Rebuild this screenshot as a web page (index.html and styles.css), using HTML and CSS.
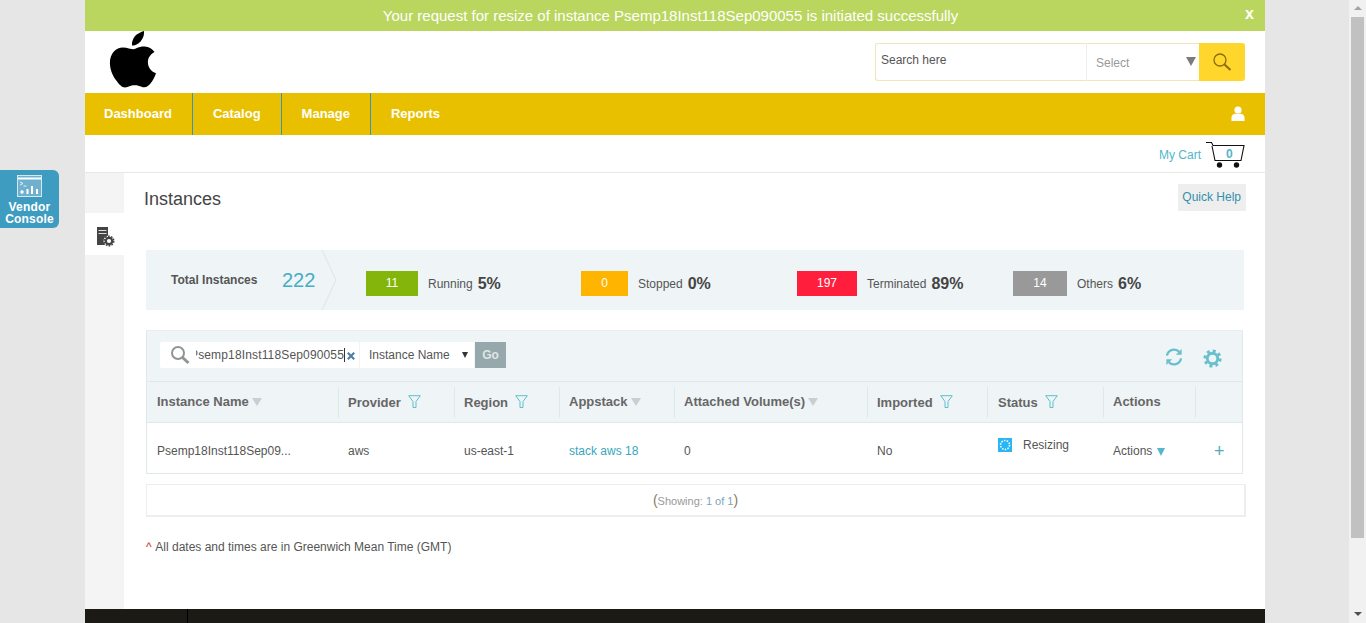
FILE: index.html
```html
<!DOCTYPE html>
<html lang="en">
<head>
    <meta charset="UTF-8">
    <title>Instances</title>
    <link rel="stylesheet" href="styles.css">
</head>
<body>
    <a class="vendor-tab">
        <svg width="26" height="23" viewBox="0 0 26 23" fill="none" stroke="#fff">
            <rect x="0.5" y="0.5" width="24" height="21" fill="#6fb0cf" stroke="#d5e8f2"/>
            <path d="M1 3.5h23" stroke="#fff" stroke-width="2"/>
            <path d="M3 7l3 1.5-3 1.5M6.5 11h3" stroke="#fff" stroke-width="0.8"/>
            <circle cx="5" cy="17" r="1.7" fill="#fff" stroke="none"/>
            <path d="M10.5 19v-5M15 19v-8M20 19v-5" stroke="#fff" stroke-width="2"/>
        </svg>
        <span>Vendor<br>Console</span>
    </a>

    <div class="viewport">
        <div class="app">
            <div class="notice">
                <span>Your request for resize of instance Psemp18Inst118Sep090055 is initiated successfully</span>
                <b class="notice-close">x</b>
            </div>

            <header class="header">
                <svg class="logo" width="48" height="58" viewBox="0 1 48 58">
                    <path fill="#000" d="M35 1c.4 4-1.100 7.600-3.300 10.300-2.300 2.800-5.500 4.500-8.700 4.200-.5-3.700 1.200-7.400 3.300-9.800C28.600 3.900 32 1.800 35 1z"/>
                    <path fill="#000" d="M24.500 19.300c2.200 0 5.200-2.700 10-2.700 3.200 0 7.900 1.200 11 5.300-5.600 3.200-6.600 7.400-6.600 10.300 0 5.600 3.700 9.400 8.100 11.100-1 3.200-2.500 6.100-4.400 8.700-2.300 3.100-4.500 5.300-7.400 5.300-3.200 0-4.700-2-9.600-2-4.600 0-6.300 2.100-9.500 2.100-3.200 0-5.800-2.800-8.200-6.200C4.300 47.400.900 39.900.900 33c0-9.700 6.300-15.500 13-15.500 4.500 0 7.900 1.800 10.600 1.800z"/>
                </svg>
                <form class="site-search">
                    <span class="site-search-text">Search here</span>
                    <span class="site-search-select">Select<i class="caret-grey"></i></span>
                    <span class="site-search-btn">
                        <svg width="20" height="20" viewBox="0 0 20 20" fill="none" stroke="#8a6d0b">
                            <circle cx="8" cy="8" r="6" stroke-width="1.300"/>
                            <path d="M12.500 12.500l6 5.500" stroke-width="2"/>
                        </svg>
                    </span>
                </form>
            </header>

            <nav class="nav">
                <a class="nav-item nav-first">Dashboard</a>
                <a class="nav-item">Catalog</a>
                <a class="nav-item">Manage</a>
                <a class="nav-item nav-last">Reports</a>
                <svg class="nav-user" width="14" height="15" viewBox="0 0 14 15" fill="#fff">
                    <circle cx="7" cy="4" r="3.600"/>
                    <path d="M0.500 15v-3.500c0-2.500 2-3.800 4-3.800h5c2 0 4 1.300 4 3.800V15z"/>
                </svg>
            </nav>

            <div class="cart-bar">
                <a class="cart-link">My Cart</a>
                <span class="cart">
                    <svg width="40" height="27" viewBox="0 0 40 27" fill="none" stroke="#111">
                        <path d="M1 .5h5.500l1.500 3h31l-3 15H10L7 4" stroke-width="1.100"/>
                        <circle cx="14.500" cy="23" r="2.700" fill="#111" stroke="none"/>
                        <circle cx="31.500" cy="23" r="2.700" fill="#111" stroke="none"/>
                    </svg>
                    <b class="cart-count">0</b>
                </span>
            </div>

            <div class="body-row">
                <aside class="rail">
                    <div class="rail-tab">
                        <svg width="18" height="20" viewBox="0 0 18 20">
                            <path fill="#444" d="M0 0h11v18H0z"/>
                            <path stroke="#ddd" stroke-width="1" d="M1.500 3.500h8M1.500 6.500h8"/>
                            <circle cx="12" cy="14" r="5.500" fill="#fff"/>
                            <circle cx="12" cy="14" r="3.200" fill="none" stroke="#444" stroke-width="2.200"/>
                            <circle cx="12" cy="14" r="4.800" fill="none" stroke="#444" stroke-width="1.400" stroke-dasharray="1.800 1.200"/>
                        </svg>
                    </div>
                </aside>

                <main class="main">
                    <div class="title-row">
                        <h1>Instances</h1>
                        <a class="quick-help">Quick Help</a>
                    </div>

                    <section class="summary">
                        <div class="summary-total">
                            <span class="summary-label">Total Instances</span>
                            <span class="summary-num">222</span>
                            <svg class="summary-chevron" width="16" height="60" viewBox="0 0 16 60" fill="none">
                                <path d="M1 0l14 30L1 60" stroke="#dde3e6"/>
                            </svg>
                        </div>
                        <div class="stat stat-running"><span class="stat-box">11</span><span class="stat-name">Running</span><b>5%</b></div>
                        <div class="stat stat-stopped"><span class="stat-box">0</span><span class="stat-name">Stopped</span><b>0%</b></div>
                        <div class="stat stat-terminated"><span class="stat-box">197</span><span class="stat-name">Terminated</span><b>89%</b></div>
                        <div class="stat stat-others"><span class="stat-box">14</span><span class="stat-name">Others</span><b>6%</b></div>
                    </section>

                    <section class="grid-wrap">
                        <div class="toolbar">
                            <div class="filter-input">
                                <svg width="20" height="20" viewBox="0 0 20 20" fill="none" stroke="#8f9597">
                                    <circle cx="8" cy="8" r="6" stroke-width="2"/>
                                    <path d="M12.500 12.500l6 5.500" stroke-width="3"/>
                                </svg>
                                <span class="filter-value"><span>Psemp18Inst118Sep090055</span></span>
                                <svg class="filter-clear" width="8" height="8" viewBox="0 0 8 8" stroke="#4e7ea6" stroke-width="2.200">
                                    <path d="M.8.800l6.400 6.400M7.200.800L.8 7.200"/>
                                </svg>
                            </div>
                            <div class="filter-select">Instance Name<i class="caret-dark"></i></div>
                            <span class="go-btn">Go</span>
                            <div class="tool-icons">
                                <svg class="icon-refresh" width="18" height="18" viewBox="0 0 20 20" fill="none" stroke="#68c0cd" stroke-width="2.600">
                                    <path d="M2.200 8.500A8 8 0 0 1 16 4.500"/>
                                    <path d="M17.800 11.500A8 8 0 0 1 4 15.500"/>
                                    <path fill="#68c0cd" stroke="none" d="M18.500 1v6.500H12zM1.500 19v-6.500H8z"/>
                                </svg>
                                <svg width="19" height="19" viewBox="0 0 20 20" fill="none" stroke="#68c0cd">
                                    <circle cx="10" cy="10" r="5.500" stroke-width="3"/>
                                    <circle cx="10" cy="10" r="8" stroke-width="3.200" stroke-dasharray="3.100 3.180"/>
                                </svg>
                            </div>
                        </div>

                        <div class="grid-row grid-head">
                            <div class="cell c-name">Instance Name<i class="sort"></i></div>
                            <div class="cell c-provider has-filter">Provider<svg class="funnel" width="13" height="14" viewBox="0 0 13 14"><path d="M.7.700h11.600L8 6.500V12.500H5V6.500z"/></svg></div>
                            <div class="cell c-region has-filter">Region<svg class="funnel" width="13" height="14" viewBox="0 0 13 14"><path d="M.7.700h11.600L8 6.500V12.500H5V6.500z"/></svg></div>
                            <div class="cell c-appstack">Appstack<i class="sort"></i></div>
                            <div class="cell c-volumes">Attached Volume(s)<i class="sort"></i></div>
                            <div class="cell c-imported has-filter">Imported<svg class="funnel" width="13" height="14" viewBox="0 0 13 14"><path d="M.7.700h11.600L8 6.500V12.500H5V6.500z"/></svg></div>
                            <div class="cell c-status has-filter">Status<svg class="funnel" width="13" height="14" viewBox="0 0 13 14"><path d="M.7.700h11.600L8 6.500V12.500H5V6.500z"/></svg></div>
                            <div class="cell c-actions">Actions</div>
                            <div class="cell c-more"></div>
                        </div>

                        <div class="grid-row grid-data">
                            <div class="cell c-name">Psemp18Inst118Sep09...</div>
                            <div class="cell c-provider">aws</div>
                            <div class="cell c-region">us-east-1</div>
                            <div class="cell c-appstack"><a>stack aws 18</a></div>
                            <div class="cell c-volumes">0</div>
                            <div class="cell c-imported">No</div>
                            <div class="cell c-status status-cell">
                                <span class="status-icon">
                                    <svg width="14" height="14" viewBox="0 0 14 14" fill="none">
                                        <circle cx="7" cy="7" r="4.500" stroke="#fff" stroke-width="1.500" stroke-dasharray="1.500 1.300"/>
                                    </svg>
                                </span>
                                <span>Resizing</span>
                            </div>
                            <div class="cell c-actions">Actions<i class="caret-teal"></i></div>
                            <div class="cell c-more"><span class="plus">+</span></div>
                        </div>
                    </section>

                    <div class="pager">(<span class="pager-text">Showing: <em>1 of 1</em></span>)</div>

                    <p class="gmt-note"><span class="gmt-mark">^</span> All dates and times are in Greenwich Mean Time (GMT)</p>
                </main>
            </div>

            <footer class="footer"><span class="footer-line"></span></footer>
        </div>
    </div>

    <div class="scrollbar">
        <i class="scroll-up"></i>
        <div class="scroll-track"><div class="scroll-thumb"></div></div>
        <i class="scroll-down"></i>
    </div>
</body>
</html>
```

FILE: styles.css
```css
html, body {
    height: 100%;
}

body {
    margin: 0;
    display: flex;
    overflow: hidden;
    background-color: #e6e6e6;
    font-family: "Liberation Sans", Arial, sans-serif;
    font-size: 12px;
    color: #555;
}

a {
    color: inherit;
    text-decoration: none;
}

i {
    display: inline-block;
}

.viewport {
    flex: 1;
    padding-left: 85px;
}

.app {
    width: 1180px;
    height: 623px;
    display: flex;
    flex-direction: column;
    background-color: #fff;
}

/* vendor console tab */
.vendor-tab {
    position: absolute;
    left: 0;
    top: 170px;
    width: 59px;
    height: 58px;
    box-sizing: border-box;
    padding-top: 5px;
    background-color: #3f9cc1;
    border-radius: 0 6px 6px 0;
    color: #fff;
    font-size: 12px;
    letter-spacing: 0.2px;
    font-weight: bold;
    line-height: 12px;
    text-align: center;
}

.vendor-tab svg {
    display: block;
    margin: 0 auto 3px;
}

/* notice */
.notice {
    position: relative;
    height: 31px;
    box-sizing: border-box;
    padding-right: 9px;
    background-color: #bad65f;
    color: #fff;
    font-size: 15px;
    line-height: 31px;
    text-align: center;
}

.notice-close {
    position: absolute;
    right: 11px;
    top: -2px;
    font-size: 16px;
}

/* header */
.header {
    height: 62px;
    display: flex;
    justify-content: space-between;
    padding: 0 20px 0 24px;
}

.logo {
    display: block;
}

.site-search {
    display: flex;
    width: 370px;
    height: 38px;
    margin: 12px 0 0;
}

.site-search-text {
    width: 212px;
    box-sizing: border-box;
    border: 1px solid #efe7b5;
    border-right: 1px solid #eee;
    border-radius: 3px 0 0 3px;
    color: #555;
    line-height: 33px;
    padding-left: 5px;
}

.site-search-select {
    position: relative;
    width: 112px;
    border-top: 1px solid #efe7b5;
    border-bottom: 1px solid #efe7b5;
    color: #999;
    line-height: 38px;
    padding-left: 9px;
    box-sizing: border-box;
}

.caret-grey {
    position: absolute;
    right: 3px;
    top: 13px;
    border-left: 5px solid transparent;
    border-right: 5px solid transparent;
    border-top: 9px solid #7c7c7c;
}

.site-search-btn {
    width: 46px;
    display: flex;
    align-items: center;
    justify-content: center;
    background-color: #ffd62b;
    border-radius: 0 3px 3px 0;
}

/* nav */
.nav {
    height: 42px;
    display: flex;
    align-items: stretch;
    background-color: #e9c000;
    color: #fff;
    font-size: 13px;
    font-weight: bold;
    line-height: 41px;
}

.nav-item {
    padding: 0 20px;
    border-right: 1px solid #3b93b5;
}

.nav-first {
    padding-left: 19px;
}

.nav-last {
    border-right: none;
}

.nav-user {
    margin: 13px 20px 0 auto;
}

/* cart */
.cart-bar {
    height: 37px;
    display: flex;
    justify-content: flex-end;
    padding-right: 20px;
    border-bottom: 1px solid #e8e8e8;
}

.cart-link {
    color: #53b6cb;
    line-height: 40px;
    margin-right: 4px;
}

.cart {
    position: relative;
    width: 40px;
    padding-top: 7px;
}

.cart svg {
    display: block;
}

.cart-count {
    position: absolute;
    left: 21px;
    top: 12px;
    color: #53b6cb;
}

/* body */
.body-row {
    flex: 1;
    display: flex;
}

.rail {
    flex: none;
    width: 39px;
    padding-top: 40px;
    background-color: #f4f4f4;
}

.rail-tab {
    height: 42px;
    box-sizing: border-box;
    padding: 14px 0 0 12px;
    background-color: #fff;
}

.rail-tab svg {
    display: block;
}

.main {
    flex: 1;
    min-width: 0;
    padding: 0 20px 0 22px;
}

.title-row {
    display: flex;
    justify-content: space-between;
    height: 77px;
}

.title-row h1 {
    margin: 16px 0 0 -2px;
    font-size: 18px;
    font-weight: normal;
    color: #444;
}

.quick-help {
    align-self: flex-start;
    margin: 11px -1px 0 0;
    background-color: #eeeeee;
    color: #3190ad;
    line-height: 27px;
    padding: 0 5px 0 4px;
}

/* summary strip */
.summary {
    display: flex;
    align-items: center;
    height: 60px;
    width: 1098px;
    background-color: #eff4f7;
}

.summary-total {
    position: relative;
    display: flex;
    width: 220px;
    height: 60px;
    box-sizing: border-box;
    padding-left: 25px;
    flex: none;
}

.summary-label {
    font-weight: bold;
    color: #555;
    line-height: 60px;
    width: 111px;
}

.summary-num {
    font-size: 20px;
    color: #45aec4;
    line-height: 60px;
}

.summary-chevron {
    position: absolute;
    left: 175px;
    top: 0;
}

.stat {
    display: flex;
    align-items: center;
    width: 216px;
    flex: none;
    margin-top: 7px;
}

.stat-running {
    width: 215px;
}

.stat-box {
    height: 25px;
    line-height: 25px;
    color: #fff;
    text-align: center;
    margin-right: 10px;
}

.stat-name {
    margin-right: 5px;
}

.stat b {
    font-size: 16px;
    color: #444;
}

.stat-running .stat-box { width: 52px; background-color: #84b50a; }
.stat-stopped .stat-box { width: 47px; background-color: #ffb400; }
.stat-terminated .stat-box { width: 60px; background-color: #ff1f3c; }
.stat-others .stat-box { width: 54px; background-color: #999; }

/* grid */
.grid-wrap {
    width: 1095px;
    margin-top: 20px;
    border: 1px solid #dfe9ea;
    border-top-color: #e8eced;
}

.toolbar {
    height: 51px;
    display: flex;
    padding: 11px 20px 0 13px;
    box-sizing: border-box;
    background-color: #eff4f7;
    border-bottom: 1px solid #dfe9ea;
}

.filter-input {
    width: 199px;
    height: 26px;
    display: flex;
    align-items: center;
    box-sizing: border-box;
    padding-left: 10px;
    background-color: #fff;
    border-radius: 2px;
}

.filter-value {
    width: 148px;
    margin-left: 6px;
    overflow: hidden;
    direction: rtl;
    white-space: nowrap;
    letter-spacing: 0.15px;
    border-right: 1px solid #333;
    flex: none;
    color: #555;
    line-height: 14px;
}

.filter-clear {
    margin: 2px 0 0 2px;
    flex: none;
}

.filter-select {
    position: relative;
    width: 114px;
    height: 26px;
    box-sizing: border-box;
    margin-left: 1px;
    padding-left: 9px;
    background-color: #fff;
    line-height: 27px;
}

.caret-dark {
    position: absolute;
    right: 6px;
    top: 10px;
    border-left: 3px solid transparent;
    border-right: 3px solid transparent;
    border-top: 6px solid #333;
}

.go-btn {
    width: 31px;
    height: 26px;
    margin-left: 1px;
    background-color: #96a8ab;
    color: #dfe6e7;
    font-weight: bold;
    text-align: center;
    line-height: 26px;
}

.tool-icons {
    margin-left: auto;
    display: flex;
    align-items: flex-start;
    gap: 20px;
    padding: 7px 0 0;
}

.icon-refresh {
    margin-top: -1px;
}

.grid-row {
    display: grid;
    grid-template-columns: 192px 116px 105px 115px 193px 120px 116px 92px 1fr;
}

.grid-head {
    height: 41px;
    box-sizing: border-box;
    padding-top: 5px;
    background-color: #eff4f7;
    border-bottom: 1px solid #dfe9ea;
    font-size: 13px;
    font-weight: bold;
    color: #666;
    line-height: 30px;
}

.cell {
    padding-left: 9px;
    white-space: nowrap;
}

.c-name, .c-status {
    padding-left: 10px;
}

.grid-head .cell {
    height: 31px;
    border-right: 1px solid #dfe9ea;
    box-sizing: border-box;
}

.grid-head .has-filter {
    line-height: 32px;
}

.grid-head .cell:last-child {
    border-right: none;
}

.grid-data {
    height: 50px;
    background-color: #fff;
    line-height: 56px;
}

.grid-data a {
    color: #39a6bd;
}

.sort {
    margin-left: 3px;
    border-left: 5px solid transparent;
    border-right: 5px solid transparent;
    border-top: 8px solid #c9cfd1;
}

.funnel {
    margin-left: 7px;
    fill: none;
    stroke: #5dbfca;
    vertical-align: -2px;
}

.status-cell {
    display: flex;
    align-items: center;
    height: 44px;
    line-height: normal;
}

.status-icon {
    width: 14px;
    height: 14px;
    margin-right: 11px;
    background-color: #29b6f2;
    line-height: 0;
}

.caret-teal {
    margin-left: 5px;
    border-left: 4px solid transparent;
    border-right: 4px solid transparent;
    border-top: 8px solid #53b6cb;
    vertical-align: -1px;
}

.plus {
    color: #53a9bd;
    font-size: 18px;
    margin-left: 9px;
}

/* pager */
.pager {
    width: 1100px;
    height: 33px;
    box-sizing: border-box;
    margin-top: 10px;
    border: 2px solid #eeeeee;
    border-width: 1px 2px 2px 1px;
    text-align: center;
    line-height: 31px;
    font-size: 14px;
    color: #8a7a60;
}

.pager-text {
    color: #999;
    font-size: 11px;
}

.pager-text em {
    font-style: normal;
    color: #7aa5b8;
}

.gmt-note {
    margin: 23px 0 0;
    color: #555;
}

.gmt-mark {
    color: #d0342c;
    margin-right: 1px;
}

/* footer */
.footer {
    height: 14px;
    background-color: #1c1a14;
    display: flex;
    padding-left: 102px;
}

.footer-line {
    width: 1px;
    background-color: #000;
}

/* scrollbar */
.scrollbar {
    width: 17px;
    height: 623px;
    display: flex;
    flex-direction: column;
    align-items: center;
    background-color: #f1f1f1;
}

.scroll-up {
    margin-top: 6px;
    border-left: 4px solid transparent;
    border-right: 4px solid transparent;
    border-bottom: 4px solid #a3a3a3;
}

.scroll-track {
    flex: 1;
    width: 100%;
    margin-top: 7px;
}

.scroll-thumb {
    height: 521px;
    background-color: #c1c1c1;
    margin-left: 2px;
    width: 13px;
}

.scroll-down {
    margin-bottom: 7px;
    border-left: 4px solid transparent;
    border-right: 4px solid transparent;
    border-top: 4px solid #505050;
}
```
